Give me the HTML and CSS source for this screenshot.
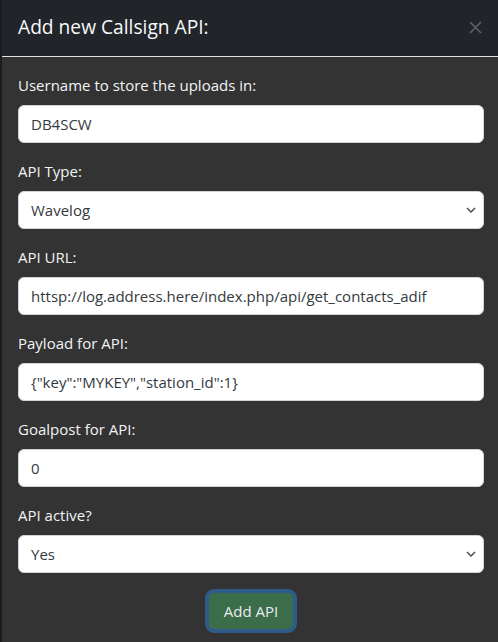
FILE: index.html
```html
<!DOCTYPE html>
<html>
<head>
<meta charset="utf-8">
<link rel="stylesheet" href="styles.css">
</head>
<body>
<div class="modal">
  <div class="modal-header">
    <h5 class="modal-title">Add new Callsign API:</h5>
    <button class="btn-close" aria-label="Close">
      <svg width="13" height="13" viewBox="0 0 13 13"><path d="M1 1L12 12M12 1L1 12" stroke="currentColor" stroke-width="1.6" fill="none"/></svg>
    </button>
  </div>
  <form class="modal-body">
    <div class="group">
      <label class="form-label">Username to store the uploads in:</label>
      <input class="form-control" type="text" value="DB4SCW">
    </div>
    <div class="group">
      <label class="form-label">API Type:</label>
      <div class="form-select"><span>Wavelog</span><svg class="chev" width="10" height="6" viewBox="0 0 10 6"><path d="M1 1L5 5L9 1" stroke="currentColor" stroke-width="1.5" fill="none"/></svg></div>
    </div>
    <div class="group">
      <label class="form-label">API URL:</label>
      <input class="form-control" type="text" value="httsp://log.address.here/index.php/api/get_contacts_adif">
    </div>
    <div class="group">
      <label class="form-label">Payload for API:</label>
      <input class="form-control" type="text" value='{"key":"MYKEY","station_id":1}'>
    </div>
    <div class="group">
      <label class="form-label">Goalpost for API:</label>
      <input class="form-control" type="text" value="0">
    </div>
    <div class="group">
      <label class="form-label">API active?</label>
      <div class="form-select"><span>Yes</span><svg class="chev" width="10" height="6" viewBox="0 0 10 6"><path d="M1 1L5 5L9 1" stroke="currentColor" stroke-width="1.5" fill="none"/></svg></div>
    </div>
    <div class="actions">
      <button type="button" class="btn-add">Add API</button>
    </div>
  </form>
</div>
</body>
</html>
```
FILE: styles.css
```css
html, body {
  margin: 0;
  padding: 0;
  background: #1a1d20;
  overflow: hidden;
}
body {
  font-family: "Open Sans", "Noto Sans", sans-serif;
  font-size: 15px;
  line-height: 24px;
  color: #dee2e6;
}
.modal {
  margin-left: 2px;
  width: 498px;
  height: 642px;
  background: #333333;
}
.modal-header {
  height: 57px;
  box-sizing: border-box;
  background: #212529;
  border-bottom: 1px solid #dee2e6;
  display: flex;
  align-items: center;
  justify-content: space-between;
  padding: 0 16px;
}
.modal-title {
  margin: 0 0 2px;
  font-size: 19.2px;
  font-weight: 400;
  color: #f8f9fa;
  line-height: 30px;
}
.btn-close {
  background: none;
  border: 0;
  padding: 0;
  width: 16px;
  height: 16px;
  margin-right: 1px;
  margin-bottom: 2px;
  color: #5c6064;
  display: flex;
  align-items: center;
  justify-content: center;
}
.modal-body {
  padding: 16px 16px 0;
  display: flex;
  flex-direction: column;
}
.group {
  display: flex;
  flex-direction: column;
  margin-bottom: 16px;
}
.form-label {
  margin-bottom: 8px;
  color: #f1f3f5;
}
.form-control, .form-select {
  box-sizing: border-box;
  height: 38px;
  width: 100%;
  background: #ffffff;
  border: 1px solid #ced4da;
  border-radius: 6px;
  padding: 6px 12px;
  font-family: inherit;
  font-size: 15px;
  line-height: 24px;
  color: #343a40;
  outline: none;
}
.form-select {
  display: flex;
  align-items: center;
  justify-content: space-between;
  padding-right: 7px;
}
.chev {
  color: #495057;
}
.group:last-of-type {
  margin-bottom: 13px;
}
.actions {
  display: flex;
  justify-content: center;
}
.btn-add {
  font-family: inherit;
  font-size: 15px;
  line-height: 24px;
  color: #e9ecef;
  background: #3b6d4b;
  border: 4px solid #2f5b8b;
  border-radius: 9px;
  padding: 0 15px;
  height: 44px;
  white-space: nowrap;
  box-sizing: border-box;
}
```
